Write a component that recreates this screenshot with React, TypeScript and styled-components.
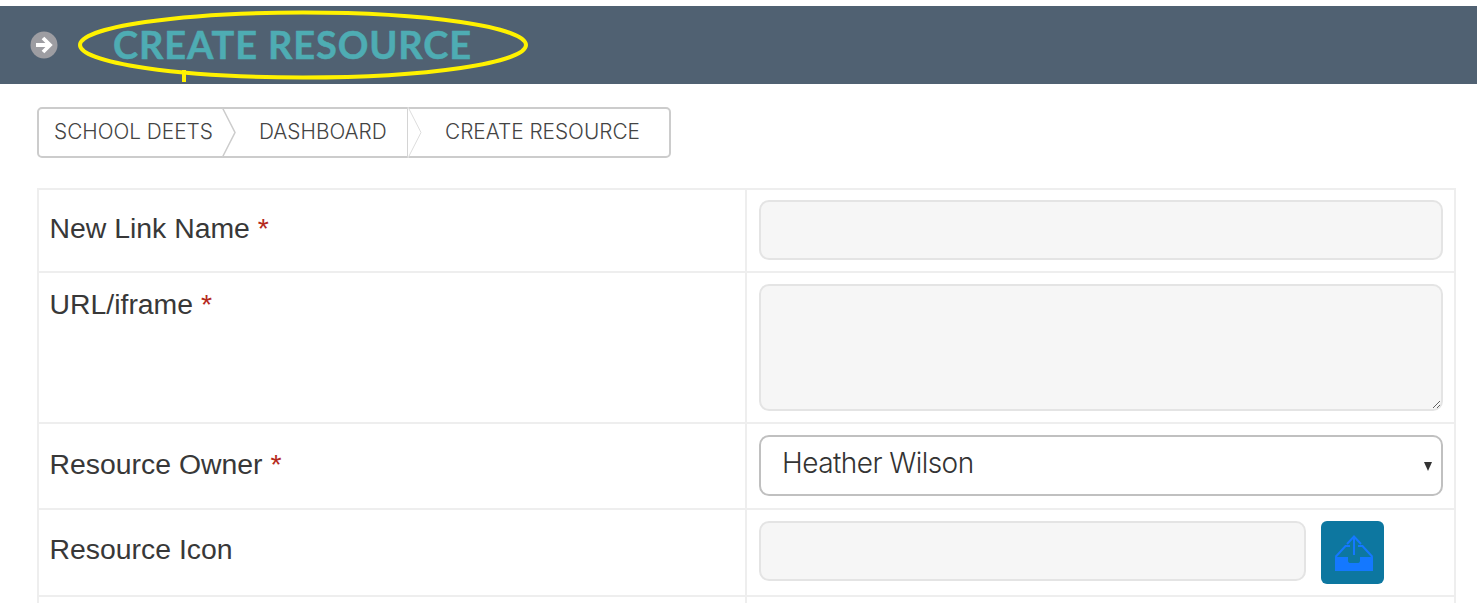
import React from "react";
import styled, { createGlobalStyle } from "styled-components";

const Global = createGlobalStyle`
  html, body { margin: 0; padding: 0; background: #fff; }
  body { font-family: "Liberation Sans", Arial, sans-serif; overflow: hidden; }
  * { box-sizing: border-box; }
`;

const Page = styled.div`
  width: 1477px;
  height: 603px;
  padding-top: 6px;
  overflow: hidden;
`;

const Header = styled.header`
  position: relative;
  display: flex;
  align-items: center;
  height: 78px;
  padding-left: 30px;
  background: #506172;
`;

const HeaderIcon = styled.svg`
  width: 28px;
  height: 28px;
  flex: none;
  filter: blur(0.6px);
`;

const Title = styled.h1`
  margin: 0 0 3px 55px;
  font-family: Lato, sans-serif;
  font-size: 38px;
  font-weight: 700;
  line-height: 1;
  letter-spacing: 0.85px;
  -webkit-text-stroke: 0.5px #4eacb3;
  color: #4eacb3;
  white-space: nowrap;
`;

const Annotation = styled.svg`
  position: absolute;
  left: 70px;
  top: 0;
  width: 470px;
  height: 78px;
  pointer-events: none;
`;

const Breadcrumb = styled.nav`
  display: flex;
  width: 634px;
  height: 51px;
  margin: 23px 0 0 37px;
  border: 2px solid #ccc;
  border-radius: 5px;
`;

const Crumb = styled.a<{ $w: number; $pad: number }>`
  position: relative;
  display: flex;
  align-items: center;
  width: ${(p) => p.$w}px;
  padding: 0 0 3px ${(p) => p.$pad}px;
  font-family: Inter, "Liberation Sans", sans-serif;
  font-size: 20.8px;
  font-weight: 300;
  color: #444;
  white-space: nowrap;
  flex: none;
`;

const Chevron = styled.svg`
  position: absolute;
  top: -2px;
  right: -15px;
  width: 16px;
  height: 51px;
  z-index: 1;
`;

const FormTable = styled.div`
  display: grid;
  grid-template-columns: 708px 709px;
  width: 1419px;
  margin: 30px 0 0 37px;
  border-top: 2px solid #eee;
  border-left: 2px solid #eee;
`;

const LabelCell = styled.div<{ $h: number; $top: number }>`
  height: ${(p) => p.$h}px;
  padding: ${(p) => p.$top}px 0 0 10.5px;
  border-right: 2px solid #eee;
  border-bottom: 2px solid #eee;
  font-size: 28.4px;
  line-height: 32px;
  color: #383838;
`;

const Star = styled.span`
  color: #b5291c;
`;

const FieldCell = styled.div<{ $h: number; $top: number }>`
  display: flex;
  align-items: flex-start;
  gap: 15px;
  height: ${(p) => p.$h}px;
  padding: ${(p) => p.$top}px 0 0 12px;
  border-right: 2px solid #eee;
  border-bottom: 2px solid #eee;
`;

const TextInput = styled.input<{ $w: number }>`
  display: block;
  width: ${(p) => p.$w}px;
  height: 60px;
  background: #f6f6f6;
  border: 2px solid #e4e4e4;
  border-radius: 10px;
  outline: none;
`;

const TextArea = styled.textarea`
  display: block;
  width: 684px;
  height: 127px;
  background: #f6f6f6;
  border: 2px solid #e4e4e4;
  border-radius: 10px;
  outline: none;
`;

const SelectWrap = styled.div`
  position: relative;
  width: 684px;
  height: 61px;
`;

const Select = styled.select`
  display: block;
  width: 100%;
  height: 100%;
  padding: 0 0 6px 21px;
  appearance: none;
  background: #fff;
  border: 2px solid #c0c0c0;
  border-radius: 10px;
  outline: none;
  font-family: Inter, "Liberation Sans", sans-serif;
  font-size: 28px;
  font-weight: 300;
  letter-spacing: -0.55px;
  color: #333;
`;

const Caret = styled.span`
  position: absolute;
  top: 27px;
  right: 11px;
  width: 0;
  height: 0;
  border-left: 4.5px solid transparent;
  border-right: 4.5px solid transparent;
  border-top: 9px solid #333;
`;

const UploadButton = styled.button`
  display: flex;
  align-items: center;
  justify-content: center;
  flex: none;
  width: 63px;
  height: 63px;
  padding: 0;
  background: #0d77a0;
  border: 0;
  border-radius: 6px;
`;

const rows = [
  { h: 83, top: 22, pad: 10, label: "New Link Name", req: true },
  { h: 151, top: 15, pad: 11, label: "URL/iframe", req: true },
  { h: 86, top: 24, pad: 11, label: "Resource Owner", req: true },
  { h: 87, top: 23, pad: 11, label: "Resource Icon", req: false },
];

export default function App() {
  return (
    <Page>
      <Global />
      <Header>
        <HeaderIcon viewBox="0 0 28 28">
          <circle cx="14" cy="14" r="13.500" fill="#9d9da2" />
          <path d="M6 14h13M13 7l7 7-7 7" fill="none" stroke="#fff" strokeWidth="3.800" />
        </HeaderIcon>
        <Title>CREATE RESOURCE</Title>
        <Annotation viewBox="0 0 470 78">
          <ellipse cx="233" cy="39" rx="223" ry="32.500" fill="none" stroke="#fff200" strokeWidth="4" />
          <path d="M114 64v12" stroke="#fff200" strokeWidth="4" />
        </Annotation>
      </Header>

      <Breadcrumb>
        <Crumb $w={183} $pad={15}>
          SCHOOL DEETS
          <Chevron viewBox="0 0 16 51">
            <path d="M1 0l13 25.500L1 51" fill="#fff" stroke="#ccc" strokeWidth="1.500" />
          </Chevron>
        </Crumb>
        <Crumb $w={186} $pad={37}>
          DASHBOARD
          <Chevron viewBox="0 0 16 51">
            <path d="M1 0l13 25.500L1 51" fill="#fff" stroke="#ddd" strokeWidth="1" />
            <path d="M.5 0v51" fill="none" stroke="#d4d4d4" strokeWidth="1" />
          </Chevron>
        </Crumb>
        <Crumb $w={261} $pad={37}>CREATE RESOURCE</Crumb>
      </Breadcrumb>

      <FormTable>
        {rows.map((r, i) => (
          <React.Fragment key={r.label}>
            <LabelCell $h={r.h} $top={r.top}>
              {r.label}
              {r.req && <Star> *</Star>}
            </LabelCell>
            <FieldCell $h={r.h} $top={r.pad}>
              {i === 0 && <TextInput $w={684} />}
              {i === 1 && <TextArea />}
              {i === 2 && (
                <SelectWrap>
                  <Select defaultValue="hw">
                    <option value="hw">Heather Wilson</option>
                  </Select>
                  <Caret />
                </SelectWrap>
              )}
              {i === 3 && (
                <>
                  <TextInput $w={547} />
                  <UploadButton aria-label="Upload">
                    <svg width="63" height="63" viewBox="0 0 63 63">
                      <path d="M14 36v14h38V36H39v3.500c0 2-1 2.500-3 2.500h-6c-2 0-3-.5-3-2.500V36z" fill="#1478ff" />
                      <path d="M29 25h-4.500L14.500 36M37 25h4.500L51.500 36M33 34V16M26 23l7-7.500 7 7.500" fill="none" stroke="#1478ff" strokeWidth="2" />
                    </svg>
                  </UploadButton>
                </>
              )}
            </FieldCell>
          </React.Fragment>
        ))}
        <LabelCell $h={30} $top={0} />
        <FieldCell $h={30} $top={0} />
      </FormTable>
    </Page>
  );
}
